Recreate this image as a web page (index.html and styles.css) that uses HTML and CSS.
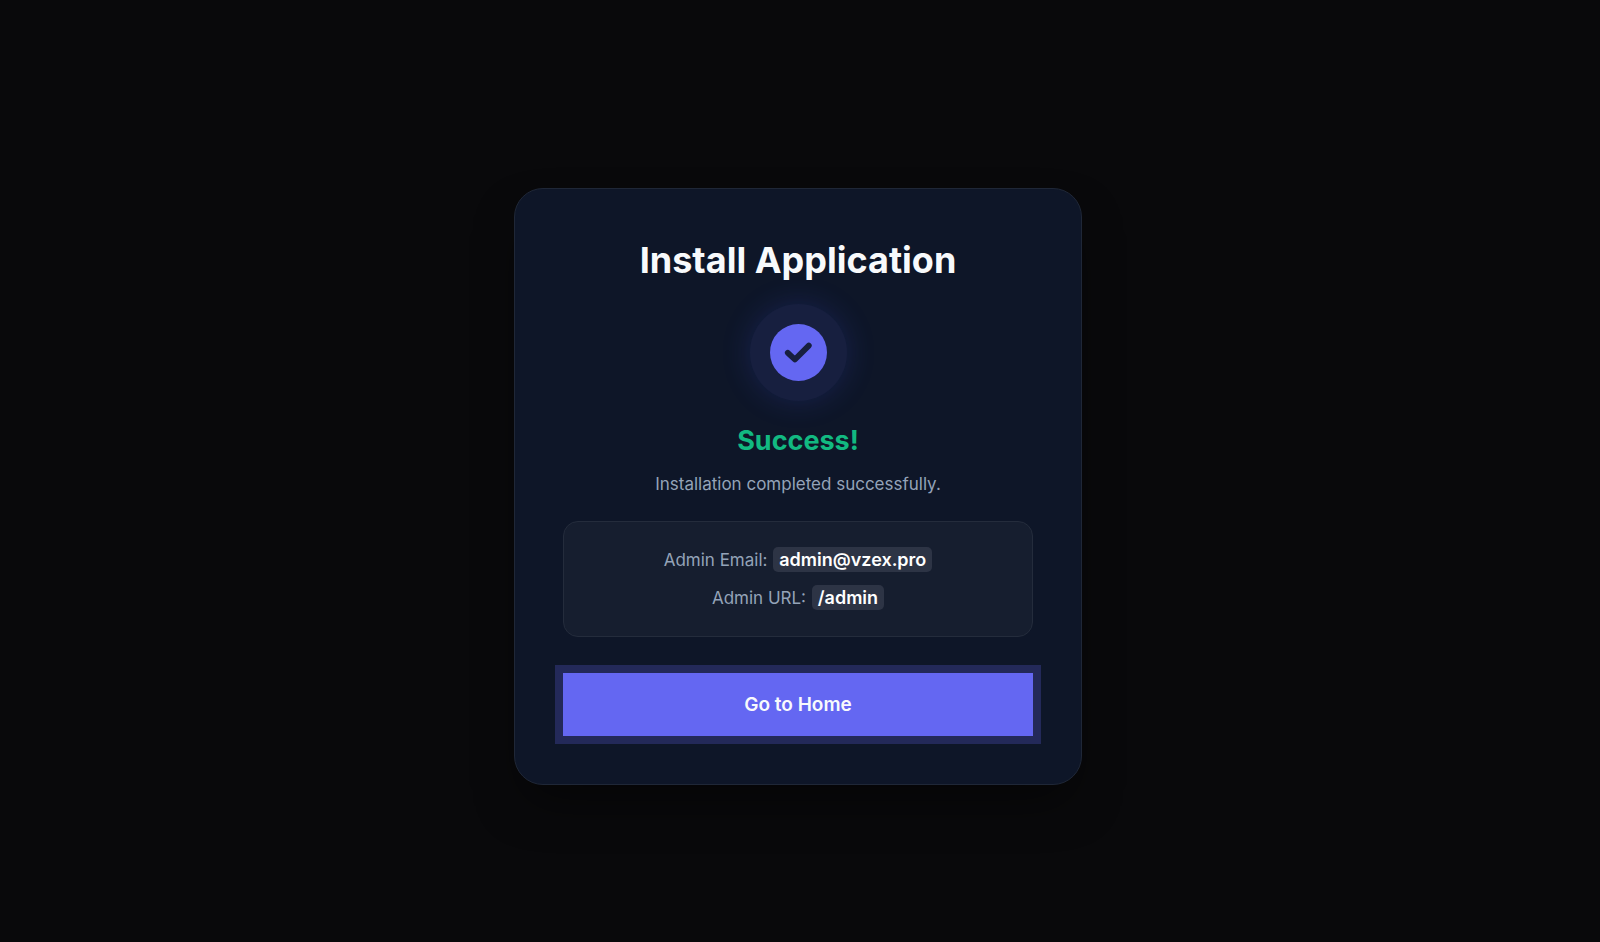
FILE: index.html
```html
<!DOCTYPE html>
<html lang="en">
<head>
    <meta charset="UTF-8">
    <meta name="viewport" content="width=device-width, initial-scale=1.0">
    <title>Install Application</title>
    <link rel="stylesheet" href="styles.css">
</head>
<body>

<main class="card">
    <h1>Install Application</h1>

    <div class="success-icon">
        <svg viewBox="0 0 57 57" width="57" height="57" aria-hidden="true">
            <circle cx="28.5" cy="28.5" r="28.5" fill="#6467f2"/>
            <path d="M17.8 28.8 L24.9 35.5 L38.8 21.6" fill="none" stroke="#171f3f" stroke-width="5.8" stroke-linecap="round" stroke-linejoin="round"/>
        </svg>
    </div>

    <h2>Success!</h2>
    <p class="message">Installation completed successfully.</p>

    <div class="info-box">
        <p>Admin Email: <strong>admin@vzex.pro</strong></p>
        <p>Admin URL: <strong>/admin</strong></p>
    </div>

    <button type="button" class="home-button">Go to Home</button>
</main>

</body>
</html>
```
FILE: styles.css
```css
* {
    box-sizing: border-box;
}
body {
    margin: 0;
    padding: 30px 4px 0 0;
    min-height: 100vh;
    display: flex;
    justify-content: center;
    align-items: center;
    background-color: #09090b;
    color: #94a3b8;
    font-family: Inter, "Liberation Sans", sans-serif;
}
h1, h2, p {
    margin: 0;
}
.card {
    width: 100%;
    max-width: 568px;
    padding: 48px;
    display: flex;
    flex-direction: column;
    align-items: center;
    text-align: center;
    background-color: #0e1628;
    border: 1px solid #1f2737;
    border-radius: 29px;
    box-shadow: 0 24px 48px -12px rgba(0, 0, 0, 0.5);
}
h1 {
    color: #f8fafc;
    font-size: 36px;
    font-weight: 700;
    line-height: 46px;
}
.success-icon {
    display: flex;
    margin-top: 21px;
    padding: 20px;
    border-radius: 50%;
    background-color: #171f3f;
    box-shadow: 0 0 30px rgba(60, 80, 230, 0.2);
}
h2 {
    margin-top: 23px;
    color: #12b981;
    font-size: 27px;
    font-weight: 700;
    line-height: 34px;
}
.message {
    margin-top: 12px;
    font-size: 17px;
    line-height: 28px;
}
.info-box {
    width: 100%;
    margin-top: 23px;
    padding: 19px;
    display: flex;
    flex-direction: column;
    background-color: #161e2f;
    border: 1px solid #242c3c;
    border-radius: 15px;
    font-size: 17px;
    line-height: 38px;
}
.info-box strong {
    margin-left: 1px;
    padding: 2px 6px;
    border-radius: 5px;
    background-color: #2d3445;
    color: #ffffff;
    font-size: 18px;
    font-weight: 600;
}
.home-button {
    width: 100%;
    margin-top: 36px;
    padding: 20px;
    border: none;
    background-color: #6467f2;
    box-shadow: 0 0 0 8px #232959;
    color: #f8fafc;
    font-family: inherit;
    font-size: 19px;
    font-weight: 600;
    line-height: 23px;
    cursor: pointer;
}
```
